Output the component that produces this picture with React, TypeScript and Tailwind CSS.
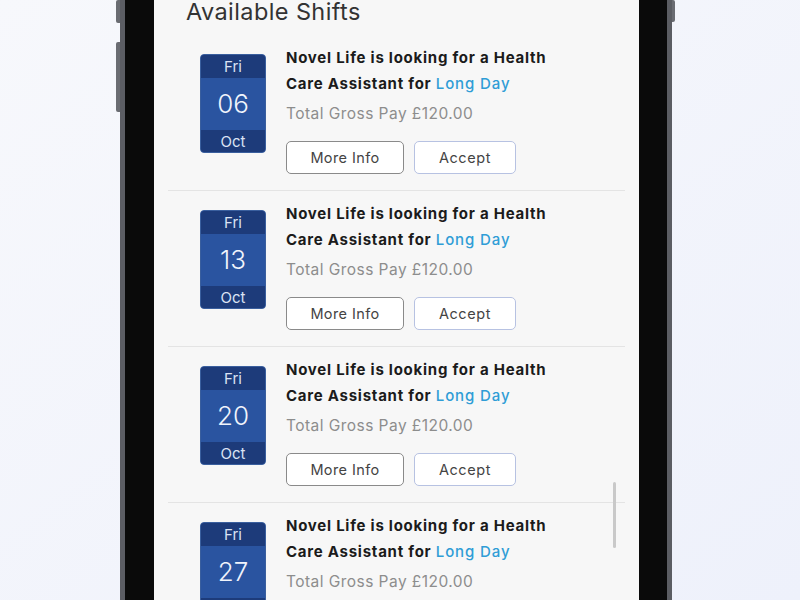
import React from "react";

type Shift = { day: string; date: string; month: string };

const shifts: Shift[] = [
  { day: "Fri", date: "06", month: "Oct" },
  { day: "Fri", date: "13", month: "Oct" },
  { day: "Fri", date: "20", month: "Oct" },
  { day: "Fri", date: "27", month: "Oct" },
];

function DateBlock({ shift }: { shift: Shift }) {
  return (
    <div className="mt-[9px] w-[66px] h-[99px] shrink-0 rounded-[4px] overflow-hidden flex flex-col bg-[#2a54a0] border border-[#3a5f9e]">
      <div className="h-[23px] bg-[#1d3b7a] flex items-center justify-center text-[15px] leading-none text-[#dbe3f4]">
        {shift.day}
      </div>
      <div className="flex-1 flex items-center justify-center text-[26px] font-light leading-none text-[#f1f4fc]">
        {shift.date}
      </div>
      <div className="h-[22px] bg-[#1d3b7a] flex items-center justify-center text-[15px] leading-none text-[#dbe3f4]">
        {shift.month}
      </div>
    </div>
  );
}

function ShiftCard({ shift }: { shift: Shift }) {
  return (
    <div className="flex items-start pl-[32px] pt-[10px] pb-[16px] border-b border-[#e4e4e4]">
      <DateBlock shift={shift} />
      <div className="ml-[20px] flex flex-col">
        <p className="text-[15px] leading-[26px] font-bold tracking-[0.75px] text-[#1b1b1b]">
          Novel Life is looking for a Health
          <br />
          Care Assistant for{" "}
          <span className="font-medium tracking-[0.9px] text-[#2f9dd6]">Long Day</span>
        </p>
        <p className="mt-[4px] text-[15.5px] leading-[26px] tracking-[0.45px] text-[#8d8d8d]">
          Total Gross Pay £120.00
        </p>
        <div className="mt-[14px] flex gap-[10px]">
          <button className="w-[118px] h-[33px] rounded-[5px] border-[1.5px] border-[#8a8a8a] bg-white text-[14.5px] tracking-[0.4px] text-[#444]">
            More Info
          </button>
          <button className="w-[102px] h-[33px] rounded-[5px] border-[1.5px] border-[#b7c2e2] bg-white text-[14.5px] tracking-[0.6px] text-[#444]">
            Accept
          </button>
        </div>
      </div>
    </div>
  );
}

export default function App() {
  return (
    <div
      className="w-[800px] h-[600px] overflow-hidden bg-gradient-to-br from-[#f7f8fc] to-[#eef1fb] flex pl-[120px]"
      style={{ fontFamily: "Inter, 'Noto Sans', sans-serif" }}
    >
      <div className="relative w-[552px] h-full bg-[#5b5d63] px-[5px]">
        {/* side buttons */}
        <div className="absolute left-[-4px] top-0 w-[4px] h-[23px] bg-[#6a6c72] rounded-l-[2px]" />
        <div className="absolute left-[-4px] top-[42px] w-[4px] h-[70px] bg-[#6a6c72] rounded-l-[2px]" />
        <div className="absolute right-[-3px] top-0 w-[3px] h-[22px] bg-[#6a6c72] rounded-r-[2px]" />

        <div className="h-full bg-[#0a0a0a] pl-[29px] pr-[28px]">
          <div className="relative h-full bg-[#f7f7f7] overflow-hidden">
            <h1 className="pl-[32px] -mt-[4px] h-[39px] text-[23.5px] leading-[32px] tracking-[0.4px] text-[#333]">
              Available Shifts
            </h1>
            <div className="mx-[14px]">
              {shifts.map((s, i) => (
                <ShiftCard key={i} shift={s} />
              ))}
            </div>
            {/* scrollbar */}
            <div className="absolute left-[459px] top-[482px] w-[3px] h-[66px] rounded-full bg-[#c9c9c9]" />
          </div>
        </div>
      </div>
    </div>
  );
}
